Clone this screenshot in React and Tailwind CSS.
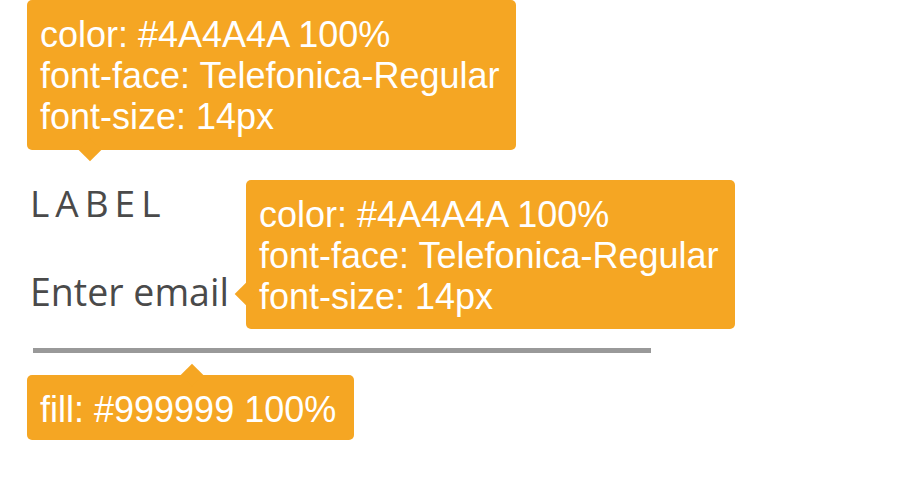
const Tip = ({ className, arrow, children }) => (
  <div
    className={`absolute rounded-[5px] bg-[#F5A623] pl-[13px] pt-[14px] text-[36px] leading-[41px] text-white font-['Liberation_Sans',Arial,sans-serif] whitespace-nowrap ${className}`}
  >
    <span className={`absolute w-[16px] h-[16px] rotate-45 bg-[#F5A623] ${arrow}`} />
    <div className="relative">{children}</div>
  </div>
);

export default function App() {
  return (
    <div className="relative w-[915px] h-[483px] bg-white overflow-hidden">
      <div className="pt-[184px] pl-[30px] font-['Open_Sans',sans-serif] text-[#4a4a4a]">
        <div className="text-[37px] leading-[37px] tracking-[6px]">LABEL</div>
        <div className="mt-[52px] text-[37.5px] leading-[37px]">Enter email</div>
        <div className="mt-[38px] ml-[3px] w-[618px] h-[5px] bg-[#999999]" />
      </div>

      <Tip className="left-[27px] top-0 w-[489px] h-[150px]" arrow="left-[55px] bottom-[-8px]">
        <div>color: #4A4A4A 100%</div>
        <div>font-face: Telefonica-Regular</div>
        <div>font-size: 14px</div>
      </Tip>

      <Tip className="left-[246px] top-[180px] w-[489px] h-[149px]" arrow="left-[-8px] top-[106px]">
        <div>color: #4A4A4A 100%</div>
        <div>font-face: Telefonica-Regular</div>
        <div>font-size: 14px</div>
      </Tip>

      <Tip className="left-[27px] top-[375px] w-[327px] h-[65px]" arrow="left-[157px] top-[-8px]">
        <div>fill: #999999 100%</div>
      </Tip>
    </div>
  );
}
